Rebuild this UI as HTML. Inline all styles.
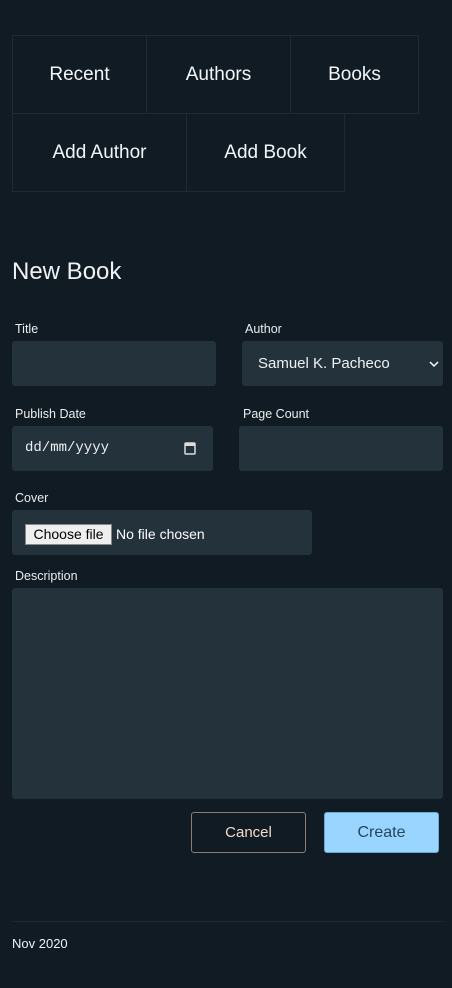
<!DOCTYPE html>
<html><head><meta charset="utf-8"><style>
*{box-sizing:border-box;margin:0;padding:0}
body{width:452px;height:988px;background:#111b23;color:#eef2f5;font-family:"Liberation Sans",sans-serif;position:relative;overflow:hidden}
.a{position:absolute}
.nav{border:1px solid #1f2b33;display:flex;align-items:center;justify-content:center;font-size:19px;color:#f2f6f8}
.lbl{font-size:12.5px;color:#e8edf0}
.in{background:#24323b;border-radius:3px}
</style></head><body>
<div class="a nav" style="left:12px;top:35px;width:135px;height:79px">Recent</div>
<div class="a nav" style="left:146px;top:35px;width:145px;height:79px">Authors</div>
<div class="a nav" style="left:290px;top:35px;width:129px;height:79px">Books</div>
<div class="a nav" style="left:12px;top:113px;width:175px;height:79px">Add Author</div>
<div class="a nav" style="left:186px;top:113px;width:159px;height:79px">Add Book</div>

<div class="a" style="left:12px;top:258px;font-size:24px">New Book</div>

<div class="a lbl" style="left:15px;top:322px">Title</div>
<div class="a in" style="left:12px;top:341px;width:204px;height:45px"></div>
<div class="a lbl" style="left:245px;top:322px">Author</div>
<div class="a in" style="left:242px;top:341px;width:201px;height:45px"><span class="a" style="left:16px;top:14px;font-size:15px">Samuel K. Pacheco</span>
<svg class="a" style="left:187px;top:19px" width="10" height="8" viewBox="0 0 10 8"><path d="M1 2l4 4 4-4" stroke="#fff" stroke-width="1.5" fill="none"/></svg></div>

<div class="a lbl" style="left:15px;top:407px">Publish Date</div>
<div class="a in" style="left:12px;top:426px;width:201px;height:45px"><span class="a" style="left:13px;top:14px;font-family:'Liberation Mono',monospace;font-size:14px">dd/mm/yyyy</span>
<svg class="a" style="left:172px;top:15px" width="12" height="14" viewBox="0 0 12 14"><rect x="1" y="2" width="10" height="11" rx="1" stroke="#ddd" stroke-width="1.5" fill="none"/><rect x="1" y="2" width="10" height="3" fill="#ddd"/></svg></div>
<div class="a lbl" style="left:243px;top:407px">Page Count</div>
<div class="a in" style="left:239px;top:426px;width:204px;height:45px"></div>

<div class="a lbl" style="left:15px;top:491px">Cover</div>
<div class="a in" style="left:12px;top:510px;width:300px;height:45px">
<div class="a" style="left:13px;top:14px;width:87px;height:21px;background:#efefef;border:1px solid #888;color:#000;font-size:14px;text-align:center;line-height:19px">Choose file</div>
<span class="a" style="left:104px;top:16px;font-size:14px;color:#fff">No file chosen</span></div>

<div class="a lbl" style="left:15px;top:569px">Description</div>
<div class="a in" style="left:12px;top:588px;width:431px;height:211px"></div>

<div class="a" style="left:191px;top:812px;width:115px;height:41px;border:1px solid #8a7d72;border-radius:3px;color:#f3dcc8;font-size:15px;text-align:center;line-height:39px">Cancel</div>
<div class="a" style="left:324px;top:812px;width:115px;height:41px;background:#99d5ff;border:1px solid #6aa9d6;border-radius:3px;color:#23475e;font-size:16px;text-align:center;line-height:39px">Create</div>

<div class="a" style="left:12px;top:921px;width:431px;height:1px;background:#1d2830"></div>
<div class="a" style="left:12px;top:936px;font-size:13px">Nov 2020</div>
</body></html>
